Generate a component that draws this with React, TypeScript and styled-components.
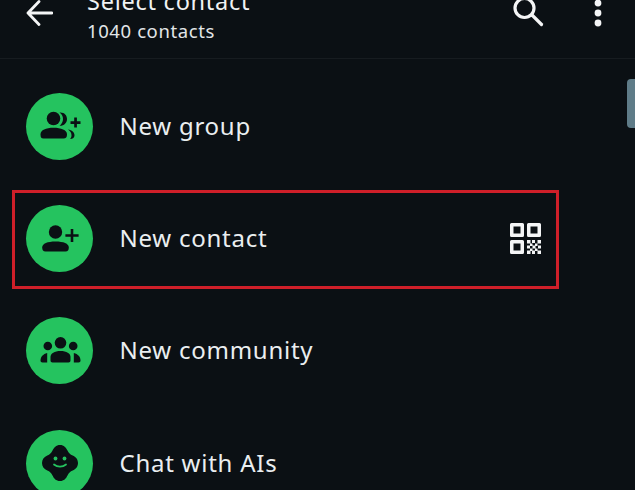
import React from "react";
import styled, { createGlobalStyle } from "styled-components";

const Global = createGlobalStyle`
  html, body { margin: 0; padding: 0; background: #0b1014; }
  #root { width: 635px; height: 490px; overflow: hidden; }
`;

const Screen = styled.div`
  position: relative;
  width: 635px;
  height: 490px;
  overflow: hidden;
  background: #0b1014;
  color: #eef1f2;
  font-family: "Noto Sans", "Open Sans", sans-serif;
`;

const Header = styled.header`
  display: flex;
  align-items: flex-start;
  height: 89px;
  margin-top: -30px;
  padding: 30px 0 0 26px;
  box-sizing: border-box;
  border-bottom: 1px solid #171c20;
`;

const IconButton = styled.div<{ $width: number; $ml?: number }>`
  display: flex;
  width: ${(p) => p.$width}px;
  margin-left: ${(p) => p.$ml ?? 0}px;
  flex: none;
`;

const Titles = styled.div`
  flex: 1;
  margin: -14px 0 0 33px;
  display: flex;
  flex-direction: column;
`;

const Title = styled.div`
  font-size: 23.500px;
  line-height: 30px;
  letter-spacing: 0.75px;
  color: #f0f2f3;
`;

const Subtitle = styled.div`
  margin-top: 3px;
  font-size: 18.500px;
  line-height: 24px;
  letter-spacing: 0.6px;
  color: #e2e6e8;
`;

const List = styled.div`
  display: flex;
  flex-direction: column;
  padding-top: 11px;
`;

const Row = styled.div`
  position: relative;
  display: flex;
  align-items: center;
  height: 112.400px;
  padding: 0 94px 0 26px;
  flex: none;
`;

const Avatar = styled.div`
  width: 67px;
  height: 67px;
  border-radius: 50%;
  background: #25c35f;
  display: flex;
  align-items: center;
  justify-content: center;
  flex: none;
`;

const Label = styled.div`
  flex: 1;
  margin-left: 26.500px;
  padding-bottom: 1px;
  font-size: 24px;
  line-height: 32px;
  letter-spacing: 0.75px;
  color: #eaeef0;
`;

const Highlight = styled.div`
  position: absolute;
  left: 12px;
  top: 7.600px;
  width: 547px;
  height: 99.500px;
  box-sizing: border-box;
  border: 3px solid #cf1f29;
  pointer-events: none;
`;

const Scrollbar = styled.div`
  position: absolute;
  right: 0;
  top: 79px;
  width: 8px;
  height: 49px;
  border-radius: 4px 0 0 4px;
  background: #5f7c88;
`;

const Ink = "#0b1014";
const Green = "#25c35f";

const ArrowIcon = () => (
  <svg width="27" height="26" viewBox="0 0 27 26" fill="none" stroke="#f4f5f6" strokeWidth="2.800" strokeLinecap="round" strokeLinejoin="round">
    <path d="M26 13H2M13 1.500 2 13l11 11.500" />
  </svg>
);

const SearchIcon = () => (
  <svg width="32" height="28" viewBox="0 0 32 28" fill="none" stroke="#f4f5f6" strokeWidth="3.200" strokeLinecap="round">
    <circle cx="11.500" cy="8" r="9.500" />
    <path d="M19 15l9.500 9.500" />
  </svg>
);

const DotsIcon = () => (
  <svg width="8" height="28" viewBox="0 0 8 28" fill="#f4f5f6">
    <circle cx="4" cy="3" r="3.400" />
    <circle cx="4" cy="13" r="3.400" />
    <circle cx="4" cy="23" r="3.400" />
  </svg>
);

const GroupAddIcon = () => (
  <svg width="42" height="32" viewBox="0 0 42 32" fill={Ink}>
    <circle cx="14.500" cy="8.500" r="6.800" />
    <path d="M1.500 24.500c0-4.500 5.500-6.700 13-6.700s13.500 2.200 13.500 6.700c0 2.500-1 4-3.500 4h-20c-2.500 0-3-1.500-3-4z" />
    <path d="M20.500 2.500c4.500-.5 7.500 2.500 7.500 6.500s-3 7-7.500 6.800c2.200-1.600 3.500-4 3.500-6.800s-1.300-5-3.500-6.500z" />
    <path d="M29 19.500c4 .7 6.500 2.800 6.500 5.700 0 2.400-1.500 3.600-4.500 3.800 1-1 1.500-2.200 1.500-3.800 0-2.200-1.300-4.200-3.500-5.700z" />
    <path d="M35.200 7.500h2.700v3.700h3.600v2.700h-3.600v3.700h-2.700v-3.700h-3.700v-2.700h3.700z" />
  </svg>
);

const PersonAddIcon = () => (
  <svg width="38" height="28" viewBox="0 0 38 28" fill={Ink}>
    <circle cx="14.500" cy="7" r="6.700" />
    <path d="M1.200 22.500c0-4 5.300-6 13.300-6s13.300 2 13.300 6c0 2.500-1 4-3.300 4h-20c-2.300 0-3.300-1.500-3.300-4z" />
    <path d="M29.700 4h2.600v5.200h5.300v2.600h-5.300V17h-2.600v-5.200h-5.300V9.200h5.300z" />
  </svg>
);

const CommunityIcon = () => (
  <svg width="42" height="28" viewBox="0 0 42 28" fill={Ink}>
    <circle cx="21.500" cy="5.800" r="5.800" />
    <circle cx="8.800" cy="9" r="4.300" />
    <circle cx="34.200" cy="9" r="4.300" />
    <path d="M11.500 20c0-3.500 4-6 10-6s10 2.500 10 6v3.500c0 1.200-.8 2-2 2h-16c-1.200 0-2-.8-2-2z" />
    <path d="M8.200 16v9.500H3.500c-1.300 0-2-.8-2-2 0-3.500 2.500-6.500 6.700-7.500z" />
    <path d="M34.800 16v9.500h4.700c1.300 0 2-.8 2-2 0-3.500-2.500-6.500-6.700-7.500z" />
  </svg>
);

const AiIcon = () => (
  <svg width="36" height="36" viewBox="0 0 36 36">
    <path
      fill={Ink}
      d="M18 0c4 0 6 2.500 7.500 5.500 1.200 2.500 2.700 4 5.200 5 3 1.300 5.300 3.700 5.300 7.500s-2.300 6.200-5.300 7.500c-2.500 1-4 2.500-5.200 5C24 33.500 22 36 18 36s-6-2.500-7.500-5.500c-1.200-2.500-2.700-4-5.200-5C2.300 24.200 0 21.800 0 18s2.300-6.200 5.300-7.500c2.500-1 4-2.500 5.200-5C12 2.500 14 0 18 0z"
    />
    <circle cx="13.500" cy="13.500" r="1.900" fill={Green} />
    <circle cx="22.500" cy="13.500" r="1.900" fill={Green} />
    <path d="M12 19.500c3.500 2.800 8.500 2.800 12 0" fill="none" stroke={Green} strokeWidth="1.800" strokeLinecap="round" />
  </svg>
);

const QrIcon = () => (
  <svg width="31" height="31" viewBox="0 0 31 31" fill="#f4f5f6">
    <path fillRule="evenodd" d="M0 1.500A1.500 1.500 0 0 1 1.500 0h11A1.500 1.500 0 0 1 14 1.500v11a1.500 1.500 0 0 1-1.500 1.500h-11A1.500 1.500 0 0 1 0 12.500zM3.500 3.500v7h7v-7z" />
    <path fillRule="evenodd" d="M17 1.500A1.500 1.500 0 0 1 18.500 0h11A1.500 1.500 0 0 1 31 1.500v11a1.500 1.500 0 0 1-1.500 1.500h-11a1.500 1.500 0 0 1-1.500-1.500zM20.500 3.500v7h7v-7z" />
    <path fillRule="evenodd" d="M0 18.500A1.500 1.500 0 0 1 1.500 17h11a1.500 1.500 0 0 1 1.500 1.500v11a1.500 1.500 0 0 1-1.500 1.500h-11A1.500 1.500 0 0 1 0 29.500zM3.500 20.500v7h7v-7z" />
    <path d="M17 17h3.500v3.500H17zM27.500 17H31v3.500h-3.500zM22 17h3v3h-3zM20 20.500h2.500V23H20zM25 20.500h2.500V23H25zM17 22.500h3v3h-3zM22.500 22.500h3v3h-3zM28 22.500h3v3h-3zM20 25.500h2.500V28H20zM25 25.500h2.500V28H25zM17 27.500h3.500V31H17zM22 27.500h3V31h-3zM27.500 27.500H31V31h-3.500z" />
  </svg>
);

const rows = [
  { label: "New group", icon: <GroupAddIcon /> },
  { label: "New contact", icon: <PersonAddIcon />, qr: true },
  { label: "New community", icon: <CommunityIcon /> },
  { label: "Chat with AIs", icon: <AiIcon /> },
];

export default function App() {
  return (
    <>
      <Global />
      <Screen>
        <Header>
          <IconButton $width={28}><ArrowIcon /></IconButton>
          <Titles>
            <Title>Select contact</Title>
            <Subtitle>1040 contacts</Subtitle>
          </Titles>
          <IconButton $width={32}><SearchIcon /></IconButton>
          <IconButton $width={8} $ml={49}><DotsIcon /></IconButton>
          <IconButton $width={33} />
        </Header>
        <List>
          {rows.map((r) => (
            <Row key={r.label}>
              <Avatar>{r.icon}</Avatar>
              <Label>{r.label}</Label>
              {r.qr && <QrIcon />}
              {r.qr && <Highlight />}
            </Row>
          ))}
        </List>
        <Scrollbar />
      </Screen>
    </>
  );
}
